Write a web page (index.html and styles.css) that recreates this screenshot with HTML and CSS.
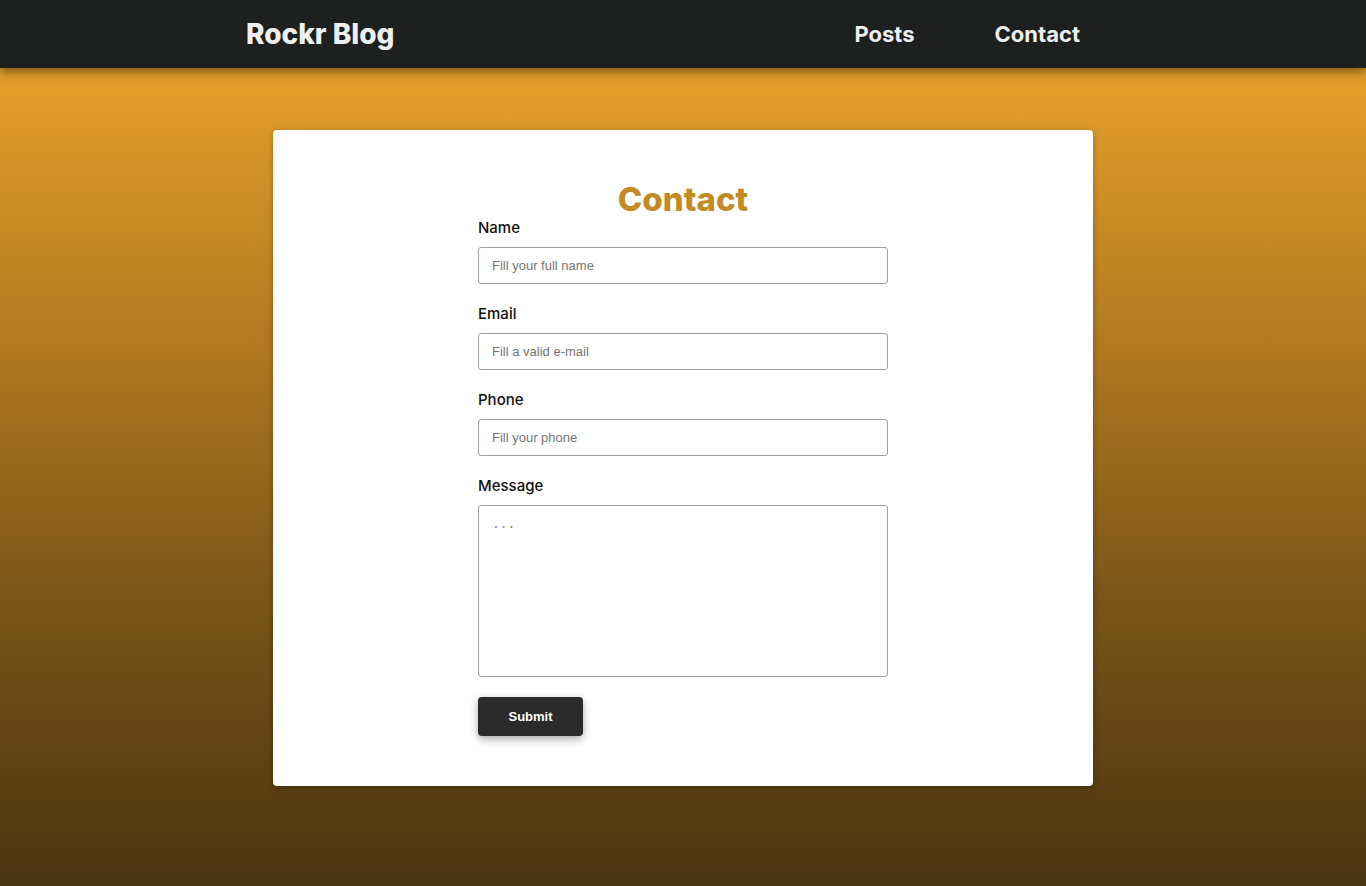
FILE: index.html
```html
<!DOCTYPE html>
<html lang="en">
<head>
<meta charset="utf-8">
<title>Rockr Blog - Contact</title>
<link rel="stylesheet" href="styles.css">
</head>
<body>
<header class="topbar">
  <div class="topbar-inner">
    <a class="brand" href="#">Rockr Blog</a>
    <nav class="nav">
      <a class="nav-link" href="#">Posts</a>
      <a class="nav-link" href="#">Contact</a>
    </nav>
  </div>
</header>
<main class="page">
  <section class="card">
    <form class="form">
      <h1 class="title">Contact</h1>
      <div class="field">
        <label class="label" for="name">Name</label>
        <input class="input" id="name" type="text" placeholder="Fill your full name">
      </div>
      <div class="field">
        <label class="label" for="email">Email</label>
        <input class="input" id="email" type="email" placeholder="Fill a valid e-mail">
      </div>
      <div class="field">
        <label class="label" for="phone">Phone</label>
        <input class="input" id="phone" type="text" placeholder="Fill your phone">
      </div>
      <div class="field">
        <label class="label" for="message">Message</label>
        <textarea class="input textarea" id="message" placeholder="..."></textarea>
      </div>
      <div class="actions">
        <button class="submit" type="button">Submit</button>
      </div>
    </form>
  </section>
</main>
</body>
</html>
```

FILE: styles.css
```css
* { box-sizing: border-box; }

html, body {
  margin: 0;
  padding: 0;
}

body {
  min-height: 886px;
  font-family: Inter, "Noto Sans", Roboto, sans-serif;
  background: linear-gradient(180deg, #e49f2a 0px, #e29d2a 90px, #b07820 350px, #7a5518 600px, #4a3410 886px);
  background-repeat: no-repeat;
}

.topbar {
  position: relative;
  z-index: 2;
  height: 68px;
  background: #1e1f1f;
  box-shadow: 0 4px 10px rgba(0, 0, 0, 0.45);
}

.topbar-inner {
  width: 874px;
  height: 68px;
  margin: 0 auto;
  display: flex;
  align-items: center;
  justify-content: space-between;
}

.brand {
  color: #efeff0;
  font-size: 28px;
  font-weight: 800;
  letter-spacing: 0;
  text-decoration: none;
  padding-bottom: 1px;
}

.nav {
  display: flex;
}

.nav-link {
  color: #efeff0;
  font-size: 22px;
  font-weight: 700;
  text-decoration: none;
  padding: 0 40px;
}

.page {
  padding-top: 62px;
  padding-bottom: 100px;
}

.card {
  width: 820px;
  margin: 0 auto;
  background: #ffffff;
  border-radius: 4px;
  box-shadow: 0 2px 6px rgba(0, 0, 0, 0.3);
  padding: 50px 0 50px;
}

.form {
  width: 410px;
  margin: 0 auto;
  display: flex;
  flex-direction: column;
}

.title {
  margin: 0;
  text-align: center;
  font-size: 33px;
  line-height: 38px;
  font-weight: 800;
  color: #c48a24;
}

.field {
  display: flex;
  flex-direction: column;
  margin-bottom: 20px;
}

.label {
  font-size: 15px;
  line-height: 18px;
  font-weight: 500;
  color: #111;
  padding-top: 1px;
  margin-bottom: 10px;
}

.input {
  height: 37px;
  width: 410px;
  border: 1px solid #a0a0a0;
  border-radius: 3px;
  padding: 0 13px;
  font-family: "Liberation Sans", Arial, sans-serif;
  font-size: 13px;
  color: #222;
  background: #fff;
  outline: none;
}

.input::placeholder {
  color: #757575;
}

.textarea {
  height: 172px;
  padding: 11px 13px;
  resize: none;
  font-family: "Liberation Mono", "Courier New", monospace;
  font-size: 13px;
}

.textarea::placeholder {
  color: #8a7a60;
}

.actions {
  display: flex;
}

.submit {
  width: 105px;
  height: 39px;
  border: none;
  border-radius: 4px;
  background: #2b2b2b;
  color: #fff;
  font-family: "Liberation Sans", Arial, sans-serif;
  font-weight: 700;
  font-size: 13px;
  box-shadow: 0 3px 8px rgba(0, 0, 0, 0.35);
  cursor: pointer;
}
```
